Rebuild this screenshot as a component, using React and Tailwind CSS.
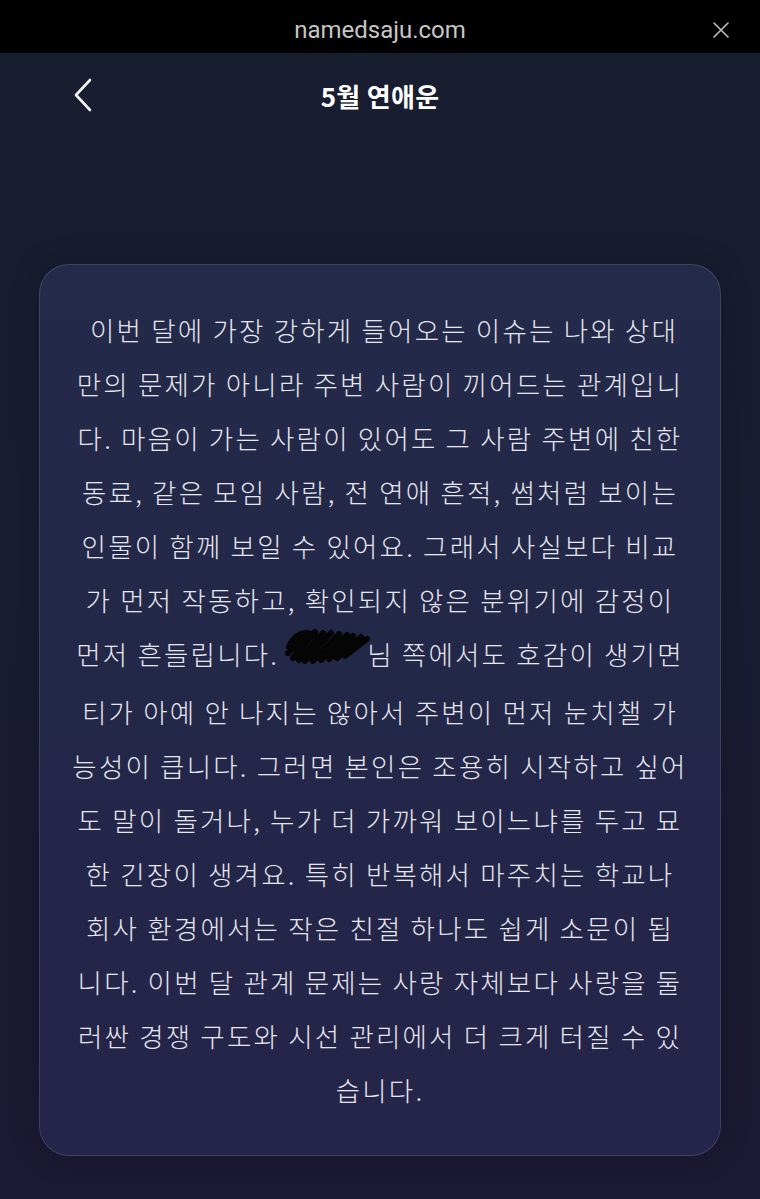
const lines = [
  "\u00a0이번 달에 가장 강하게 들어오는 이슈는 나와 상대",
  "만의 문제가 아니라 주변 사람이 끼어드는 관계입니",
  "다. 마음이 가는 사람이 있어도 그 사람 주변에 친한",
  "동료, 같은 모임 사람, 전 연애 흔적, 썸처럼 보이는",
  "인물이 함께 보일 수 있어요. 그래서 사실보다 비교",
  "가 먼저 작동하고, 확인되지 않은 분위기에 감정이",
  null,
  "티가 아예 안 나지는 않아서 주변이 먼저 눈치챌 가",
  "능성이 큽니다. 그러면 본인은 조용히 시작하고 싶어",
  "도 말이 돌거나, 누가 더 가까워 보이느냐를 두고 묘",
  "한 긴장이 생겨요. 특히 반복해서 마주치는 학교나",
  "회사 환경에서는 작은 친절 하나도 쉽게 소문이 됩",
  "니다. 이번 달 관계 문제는 사랑 자체보다 사랑을 둘",
  "러싼 경쟁 구도와 시선 관리에서 더 크게 터질 수 있",
  "습니다.",
];

function Scribble() {
  return (
    <span className="relative inline-block w-[80px] align-middle">
      <span className="invisible">가나</span>
      <svg
        className="absolute left-[-2px] top-[-4px] h-[38px] w-[86px]"
        viewBox="0 0 86 38"
        fill="none"
      >
        <path
          d="M4 20 C10 6 20 4 30 8 M3 26 L22 6 M8 31 L30 5 M14 33 L38 6 M20 34 L46 6 M28 34 L54 7 M36 33 L62 8 M44 32 L68 9 M52 31 L76 10 M60 29 L82 12"
          stroke="#050505"
          strokeWidth="6"
          strokeLinecap="round"
        />
        <path d="M6 18 C20 32 50 32 78 14" stroke="#050505" strokeWidth="7" strokeLinecap="round" />
      </svg>
    </span>
  );
}

export default function App() {
  return (
    <div
      className="min-h-[1199px] w-full bg-[linear-gradient(180deg,#181d30_0%,#1a1d33_45%,#1c1a34_100%)] text-white"
      style={{ fontFamily: '"Noto Sans CJK KR", "Noto Sans", sans-serif' }}
    >
      {/* browser bar */}
      <div className="relative flex h-[53px] items-center justify-center bg-black pt-[6px]">
        <span
          className="text-[24px] text-[#c6c6c6]"
          style={{ fontFamily: "Roboto, sans-serif" }}
        >
          namedsaju.com
        </span>
        <svg
          className="absolute right-[31px] top-[22px] h-[16px] w-[16px]"
          viewBox="0 0 16 16"
          stroke="#bdbdbd"
          strokeWidth="1.6"
          strokeLinecap="round"
        >
          <path d="M1 1 L15 15 M15 1 L1 15" />
        </svg>
      </div>

      {/* header */}
      <div className="relative flex h-[84px] items-center justify-center">
        <svg
          className="absolute left-[72px] top-[25px] h-[34px] w-[22px]"
          viewBox="0 0 22 34"
          fill="none"
          stroke="#f2f2f2"
          strokeWidth="2.6"
          strokeLinecap="round"
          strokeLinejoin="round"
        >
          <path d="M18 2 L4 17 L18 32" />
        </svg>
        <h1 className="text-[26px] font-bold tracking-[0.3px] text-white">
          5월 연애운
        </h1>
      </div>

      <div className="px-[39px] pt-[127px]">
        <div className="rounded-[30px] border border-[#ffffff1f] bg-[linear-gradient(180deg,#242a49_0%,#232748_50%,#25244a_100%)] px-[10px] pb-[38px] pt-[38px] text-center text-[26.5px] font-light leading-[54px] tracking-[2.2px] text-[#e6e6ee] shadow-[0_0_30px_rgba(0,0,0,0.25)]">
          {lines.map((l, i) =>
            l === null ? (
              <div key={i} className="whitespace-nowrap">
                먼저 흔들립니다. <Scribble />님 쪽에서도 호감이 생기면
              </div>
            ) : (
              <div key={i} className="whitespace-nowrap">
                {l}
              </div>
            )
          )}
        </div>
      </div>
    </div>
  );
}
